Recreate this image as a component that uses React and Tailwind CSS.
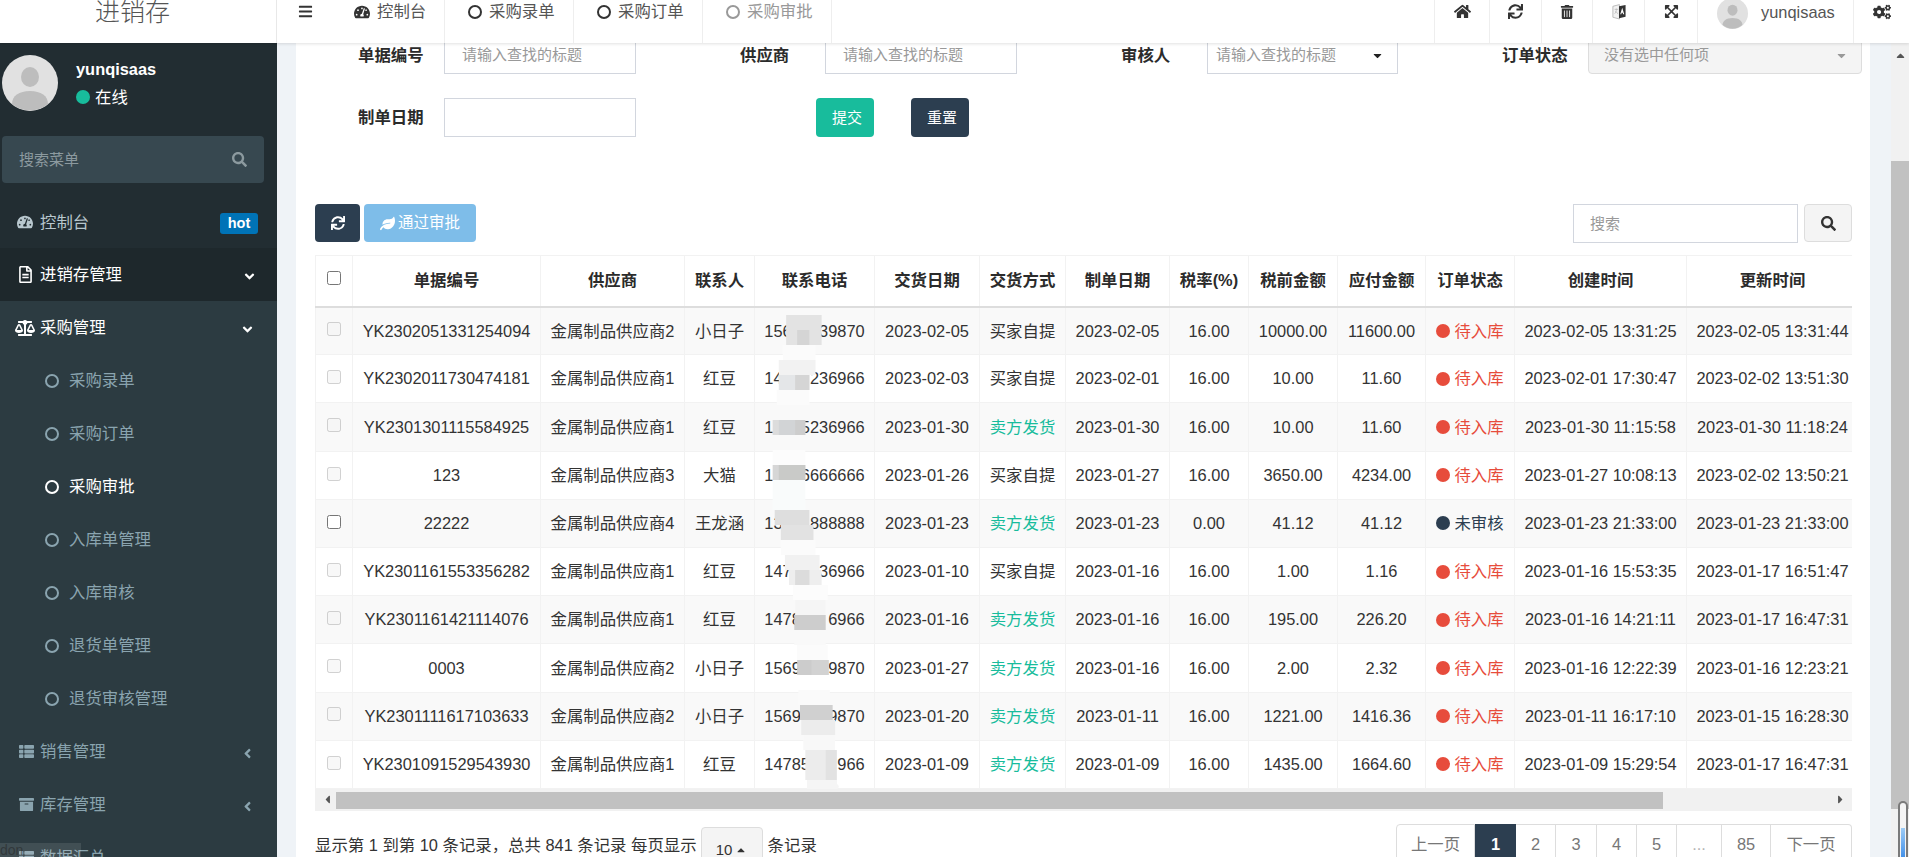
import React from "react";
import {
  FaTachometerAlt, FaBars, FaHome, FaSync, FaTrashAlt, FaExpandArrowsAlt,
  FaCogs, FaSearch, FaRegFileAlt, FaAngleDown, FaAngleLeft, FaBalanceScale, FaThList, FaArchive, FaLeaf,
  FaCaretDown, FaCaretUp, FaCaretLeft, FaCaretRight,
} from "react-icons/fa";

const rows = [
  ["YK2302051331254094", "金属制品供应商2", "小日子", "156", "39870", "2023-02-05", "买家自提", "2023-02-05", "16.00", "10000.00", "11600.00", "待入库", "2023-02-05 13:31:25", "2023-02-05 13:31:44"],
  ["YK2302011730474181", "金属制品供应商1", "红豆", "14", "236966", "2023-02-03", "买家自提", "2023-02-01", "16.00", "10.00", "11.60", "待入库", "2023-02-01 17:30:47", "2023-02-02 13:51:30"],
  ["YK2301301115584925", "金属制品供应商1", "红豆", "1", "5236966", "2023-01-30", "卖方发货", "2023-01-30", "16.00", "10.00", "11.60", "待入库", "2023-01-30 11:15:58", "2023-01-30 11:18:24"],
  ["123", "金属制品供应商3", "大猫", "1", "6666666", "2023-01-26", "买家自提", "2023-01-27", "16.00", "3650.00", "4234.00", "待入库", "2023-01-27 10:08:13", "2023-02-02 13:50:21"],
  ["22222", "金属制品供应商4", "王龙涵", "13", "888888", "2023-01-23", "卖方发货", "2023-01-23", "0.00", "41.12", "41.12", "未审核", "2023-01-23 21:33:00", "2023-01-23 21:33:00"],
  ["YK2301161553356282", "金属制品供应商1", "红豆", "147", "36966", "2023-01-10", "买家自提", "2023-01-16", "16.00", "1.00", "1.16", "待入库", "2023-01-16 15:53:35", "2023-01-17 16:51:47"],
  ["YK2301161421114076", "金属制品供应商1", "红豆", "1478", "6966", "2023-01-16", "卖方发货", "2023-01-16", "16.00", "195.00", "226.20", "待入库", "2023-01-16 14:21:11", "2023-01-17 16:47:31"],
  ["0003", "金属制品供应商2", "小日子", "1569", "9870", "2023-01-27", "卖方发货", "2023-01-16", "16.00", "2.00", "2.32", "待入库", "2023-01-16 12:22:39", "2023-01-16 12:23:21"],
  ["YK2301111617103633", "金属制品供应商2", "小日子", "1569", "9870", "2023-01-20", "卖方发货", "2023-01-11", "16.00", "1221.00", "1416.36", "待入库", "2023-01-11 16:17:10", "2023-01-15 16:28:30"],
  ["YK2301091529543930", "金属制品供应商1", "红豆", "14785", "966", "2023-01-09", "卖方发货", "2023-01-09", "16.00", "1435.00", "1664.60", "待入库", "2023-01-09 15:29:54", "2023-01-17 16:47:31"],
];

const cols = [37, 188, 144, 70, 120, 105, 86, 104, 79, 89, 88, 89, 172, 172];
const heads = ["单据编号", "供应商", "联系人", "联系电话", "交货日期", "交货方式", "制单日期", "税率(%)", "税前金额", "应付金额", "订单状态", "创建时间", "更新时间"];

const mosaic = [
  [358, 445, 45, 135, "#e3e3e3"], [385, 415, 90, 135, "#d5d5d5"], [350, 430, 135, 180, "#fbfbfb"],
  [340, 430, 180, 225, "#f2f2f2"], [340, 415, 225, 270, "#e4e6e8"], [380, 415, 225, 270, "#d5d5d5"],
  [335, 415, 270, 315, "#fbfbfb"], [325, 405, 315, 360, "#f9f9f9"], [325, 405, 360, 405, "#dcdcdc"],
  [340, 380, 360, 405, "#d2d4d6"], [380, 405, 360, 405, "#cdcdcd"], [325, 405, 405, 450, "#f9f9f9"],
  [325, 405, 450, 495, "#fcfcfc"], [325, 405, 495, 540, "#d6d6d6"], [340, 405, 495, 540, "#c9cac8"],
  [325, 405, 540, 630, "#f9fbfb"], [330, 415, 630, 675, "#dedede"], [345, 425, 675, 720, "#e2e2e2"],
  [345, 430, 720, 765, "#fbfbfb"], [355, 440, 765, 810, "#f1f1f1"], [365, 445, 810, 855, "#eeeeee"],
  [380, 415, 810, 855, "#dcdcdc"], [375, 460, 855, 900, "#fcfcfc"], [380, 455, 900, 945, "#f5f5f5"],
  [378, 455, 945, 990, "#cdcdcd"], [378, 455, 990, 1035, "#f9f9f9"], [385, 460, 1035, 1080, "#fbfbfb"],
  [385, 462, 1080, 1125, "#cccccc"], [420, 462, 1080, 1125, "#d2d2d2"], [388, 465, 1170, 1215, "#fafafa"],
  [392, 472, 1215, 1260, "#d0d0d0"], [395, 478, 1260, 1305, "#ececec"], [400, 478, 1305, 1350, "#f8f8f8"],
  [405, 482, 1350, 1440, "#ececec"], [455, 482, 1350, 1440, "#e2e2e2"],
];

const Avatar = ({ className }) => (
  <svg viewBox="0 0 56 56" className={className}>
    <circle cx="28" cy="28" r="28" fill="#e1e1e1" />
    <ellipse cx="28" cy="22" rx="9" ry="10" fill="#bdbdbd" />
    <path d="M28 36c-11 0-18 5-18 13a28 28 0 0 0 36 0c0-8-7-13-18-13z" fill="#bdbdbd" />
  </svg>
);

const Ring = ({ className = "" }) => (
  <span className={`inline-block w-[14px] h-[14px] rounded-full border-[2.5px] border-current shrink-0 ${className}`} />
);

const LanguageIcon = () => (
  <svg viewBox="0 0 16 20" className="w-[14px] h-[18px]">
    <path d="M1 3.500 8.500 1.500V18L1 16z" fill="#f2f2f2" stroke="#b5b5b5" strokeWidth="1" />
    <path d="M8 3.500 15.500 2v13.500L8 17z" fill="#333" />
    <path d="M11.700 5 14 12.500h-1.300l-.5-1.600h-1.100l-.5 1.600H9.400z" fill="#fff" />
    <path d="M3 7h4M5 6v1c0 2-1 4-2 5M4 9c1 1.500 2 2.500 3 3" fill="none" stroke="#b5b5b5" strokeWidth=".8" />
  </svg>
);

function SideItem({ icon, label, cls, chevron, badge }) {
  return (
    <div className={`flex items-center relative shrink-0 ${cls}`}>
      <span className="absolute left-[15px] w-[20px] flex justify-center">{icon}</span>
      <span className="absolute left-[40px] text-[16.4px]">{label}</span>
      {chevron}
      {badge}
    </div>
  );
}

function SubItem({ label, active }) {
  return (
    <div className={`h-[53px] flex items-center pl-[45px] shrink-0 ${active ? "text-white" : "text-[#8aa4af]"}`}>
      <Ring className="mr-[10px]" />
      <span className="text-[16.4px]">{label}</span>
    </div>
  );
}

function Sidebar() {
  return (
    <aside className="absolute left-0 top-[43px] w-[277px] h-[814px] bg-[#222d32] overflow-hidden flex flex-col">
      <div className="relative h-[93px] shrink-0">
        <Avatar className="absolute left-[2px] top-[12px] w-[56px] h-[56px]" />
        <div className="absolute left-[76px] top-[15px] text-white font-bold text-[16.4px] leading-[22px]">yunqisaas</div>
        <div className="absolute left-[76px] top-[43px] flex items-center text-white text-[16.4px] leading-[22px]">
          <span className="w-[14px] h-[14px] rounded-full bg-[#18bc9c] mr-[5px]" />在线
        </div>
      </div>
      <div className="mx-[2px] w-[262px] h-[47px] shrink-0 bg-[#374850] rounded-[4px] flex items-center justify-between pl-[17px] pr-[17px]">
        <span className="text-[15px] text-[#8c9a9f] pt-[2px]">搜索菜单</span>
        <FaSearch className="text-[15px] text-[#8c9a9f]" />
      </div>
      <div className="h-[13px] shrink-0" />
      <SideItem
        cls="text-[#b8c7ce] h-[52px]"
        icon={<FaTachometerAlt className="text-[16px]" />}
        label="控制台"
        badge={<span className="absolute left-[220px] top-[17px] w-[38px] h-[21px] rounded-[3px] bg-[#0073b7] text-white text-[14.5px] font-bold flex items-center justify-center">hot</span>}
      />
      <SideItem
        cls="h-[52px] bg-[#1e282c] text-white"
        icon={<FaRegFileAlt className="text-[17px]" />}
        label="进销存管理"
        chevron={<FaAngleDown className="absolute left-[242px] mt-[4px] text-[15px]" />}
      />
      <div className="flex-1 bg-[#2c3b41] flex flex-col border-t border-[#1e282c]">
        <SideItem
          cls="h-[53px] text-white"
          icon={<FaBalanceScale className="text-[20px]" />}
          label="采购管理"
          chevron={<FaAngleDown className="absolute left-[240px] mt-[4px] text-[15px]" />}
        />
        <SubItem label="采购录单" />
        <SubItem label="采购订单" />
        <SubItem label="采购审批" active />
        <SubItem label="入库单管理" />
        <SubItem label="入库审核" />
        <SubItem label="退货单管理" />
        <SubItem label="退货审核管理" />
        <SideItem
          cls="h-[53px] text-[#8aa4af]"
          icon={<FaThList className="text-[15px] ml-[2px]" />}
          label="销售管理"
          chevron={<FaAngleLeft className="absolute left-[240px] mt-[4px] text-[15px]" />}
        />
        <SideItem
          cls="h-[53px] text-[#8aa4af]"
          icon={<FaArchive className="text-[15px] ml-[2px]" />}
          label="库存管理"
          chevron={<FaAngleLeft className="absolute left-[240px] mt-[4px] text-[15px]" />}
        />
        <SideItem cls="h-[53px] text-[#8aa4af]" icon={<FaThList className="text-[15px] ml-[2px]" />} label="数据汇总" />
      </div>
    </aside>
  );
}

function TopBar() {
  const tab = "h-[43px] flex items-center pb-[20px] border-r border-[#eeeeee] shrink-0";
  const tool = "h-[43px] flex items-center justify-center pb-[20px] border-r border-[#eeeeee] shrink-0 text-[#333] text-[16px]";
  return (
    <header className="absolute left-0 top-0 w-[1909px] h-[43px] bg-white flex z-20 shadow-[0_1px_3px_rgba(0,0,0,0.12)] text-[#555]">
      <div className="w-[277px] h-[43px] border-r border-[#e8e8e8] shrink-0 flex justify-center relative">
        <span className="absolute left-[95px] top-[-5px] text-[25px] leading-[34px] font-light text-[#555]">进销存</span>
      </div>
      <div className="w-[60px] h-[43px] flex pl-[21px] pt-[4px] shrink-0"><FaBars className="text-[15px] text-[#333]" /></div>
      <div className={`${tab} w-[108px] pl-[17px]`}>
        <FaTachometerAlt className="text-[16px] text-[#333] mr-[7px]" /><span className="text-[16.4px]">控制台</span>
      </div>
      {["采购录单", "采购订单"].map((t) => (
        <div key={t} className={`${tab} w-[129px] pl-[23px]`}>
          <Ring className="text-[#333] mr-[7px]" /><span className="text-[16.4px]">{t}</span>
        </div>
      ))}
      <div className={`${tab} w-[129px] pl-[23px] text-[#999]`}>
        <Ring className="mr-[7px]" /><span className="text-[16.4px]">采购审批</span>
      </div>
      <div className="flex-1" />
      <div className="w-px h-[43px] bg-[#eeeeee]" />
      <div className={`${tool} w-[55px]`}><FaHome className="text-[17px]" /></div>
      <div className={`${tool} w-[52px]`}><FaSync className="text-[15px]" /></div>
      <div className={`${tool} w-[51px]`}><FaTrashAlt className="text-[14px]" /></div>
      <div className={`${tool} w-[52px]`}><LanguageIcon /></div>
      <div className={`${tool} w-[53px]`}><FaExpandArrowsAlt className="text-[15px]" /></div>
      <div className="w-[156px] h-[43px] border-r border-[#eeeeee] flex relative shrink-0">
        <Avatar className="absolute left-[19px] top-[-2px] w-[31px] h-[31px]" />
        <span className="absolute left-[63px] top-[1px] text-[16.4px] leading-[22px]">yunqisaas</span>
      </div>
      <div className="w-[55px] h-[43px] flex justify-center pt-[3px] text-[#333]"><FaCogs className="text-[18px]" /></div>
    </header>
  );
}

const labelCls = "font-semibold text-[16.4px] text-[#2b2b2b] shrink-0 whitespace-nowrap";
const inputCls = "h-[39px] border border-[#d2d6de] flex items-center text-[15px] text-[#999] shrink-0 bg-white pt-[2px]";

function Filters() {
  return (
    <div className="pt-[35px]">
      <div className="flex items-start h-[39px]">
        <div className={`${labelCls} ml-[62px] w-[64px] pt-[8px]`}>单据编号</div>
        <div className={`${inputCls} ml-[22px] w-[192px] pl-[17px]`}>请输入查找的标题</div>
        <div className={`${labelCls} ml-[104px] w-[48px] pt-[8px]`}>供应商</div>
        <div className={`${inputCls} ml-[37px] w-[192px] pl-[17px]`}>请输入查找的标题</div>
        <div className={`${labelCls} ml-[104px] w-[48px] pt-[8px]`}>审核人</div>
        <div className={`${inputCls} ml-[38px] w-[191px] pl-[8px] border-[#aaaaaa] relative`}>
          请输入查找的标题
          <FaCaretDown className="absolute left-[163px] text-[13px] text-[#222]" />
        </div>
        <div className={`${labelCls} ml-[104px] w-[64px] pt-[8px]`}>订单状态</div>
        <div className={`${inputCls} ml-[22px] w-[274px] pl-[15px] !bg-[#f4f4f4] border-[#dddddd] rounded-[4px] relative`}>
          没有选中任何项
          <FaCaretDown className="absolute left-[246px] text-[13px] text-[#999]" />
        </div>
      </div>
      <div className="flex items-center h-[39px] mt-[24px]">
        <div className={`${labelCls} ml-[62px] w-[64px]`}>制单日期</div>
        <div className={`${inputCls} ml-[22px] w-[192px]`} />
        <button className="ml-[180px] w-[58px] h-[39px] rounded-[4px] bg-[#18bc9c] text-white text-[15px] pl-[4px] pt-[1px] shrink-0">提交</button>
        <button className="ml-[37px] w-[58px] h-[39px] rounded-[4px] bg-[#2c3e50] text-white text-[15px] pl-[4px] pt-[1px] shrink-0">重置</button>
      </div>
    </div>
  );
}

function Table() {
  return (
    <div className="relative w-[1537px] h-[556px] mt-[12px] overflow-hidden">
      <table className="table-fixed border-collapse w-[1543px] text-[16.4px] text-[#333]">
        <colgroup>
          {cols.map((w, i) => <col key={i} style={{ width: w }} />)}
        </colgroup>
        <thead>
          <tr className="h-[51px] border-t border-[#f2f2f2] border-b-2 border-b-[#dddddd]">
            <th className="border-x border-[#f2f2f2] p-0 text-center">
              <input type="checkbox" className="w-[14px] h-[14px] align-middle mb-[8px]" readOnly />
            </th>
            {heads.map((h) => (
              <th key={h} className="border-x border-[#f2f2f2] p-0 text-center font-semibold text-[#2b2b2b] whitespace-nowrap">{h}</th>
            ))}
          </tr>
        </thead>
        <tbody>
          {rows.map((r, i) => {
            const pending = r[11] === "待入库";
            return (
              <tr key={i} className={`h-[48.2px] border-b border-[#f2f2f2] ${i % 2 === 0 ? "bg-[#f9f9f9]" : "bg-white"}`}>
                <td className="border-x border-[#f2f2f2] p-0 text-center">
                  <input type="checkbox" disabled={pending} className="w-[14px] h-[14px] align-middle mb-[6px]" readOnly />
                </td>
                {r.map((c, j) => {
                  if (j === 3) {
                    return (
                      <td key={j} className="border-x border-[#f2f2f2] p-0 text-center whitespace-nowrap">
                        {c}<span className="invisible">000</span>{r[4]}
                      </td>
                    );
                  }
                  if (j === 4) return null;
                  if (j === 6) {
                    return (
                      <td key={j} className={`border-x border-[#f2f2f2] p-0 text-center whitespace-nowrap ${c === "卖方发货" ? "text-[#18bc9c]" : ""}`}>{c}</td>
                    );
                  }
                  if (j === 11) {
                    return (
                      <td key={j} className={`border-x border-[#f2f2f2] p-0 whitespace-nowrap ${pending ? "text-[#e74c3c]" : "text-[#2c3e50]"}`}>
                        <span className="flex items-center justify-center">
                          <span className={`w-[14px] h-[14px] rounded-full mr-[4px] ${pending ? "bg-[#e74c3c]" : "bg-[#2c3e50]"}`} />{c}
                        </span>
                      </td>
                    );
                  }
                  return <td key={j} className="border-x border-[#f2f2f2] p-0 text-center whitespace-nowrap">{c}</td>;
                })}
              </tr>
            );
          })}
        </tbody>
      </table>
      <div className="absolute left-0 top-[534px] w-[1537px] h-[22px] bg-[#f1f1f1]">
        <FaCaretLeft className="absolute left-[6px] top-[4px] text-[13px] text-[#555]" />
        <div className="absolute left-[21px] top-[3px] w-[1327px] h-[17px] bg-[#c1c1c1]" />
        <FaCaretRight className="absolute left-[1519px] top-[4px] text-[13px] text-[#555]" />
      </div>
    </div>
  );
}

function Footer() {
  const cell = "h-[40px] flex items-center justify-center border-y border-r border-[#dddddd] text-[16.4px] text-[#777] shrink-0 bg-white";
  return (
    <div className="flex justify-between mt-[13px] w-[1537px] h-[60px]">
      <div className="flex items-start text-[16.4px] text-[#333] pt-[9px] whitespace-nowrap">
        <span className="leading-[24px]">显示第 1 到第 10 条记录，总共 841 条记录 每页显示</span>
        <span className="w-[62px] h-[40px] mt-[-6px] ml-[4px] mr-[5px] bg-[#f4f4f4] border border-[#dddddd] rounded-[4px] flex items-center justify-center text-[15px] pt-[6px]">
          10<FaCaretUp className="text-[12px] ml-[3px]" />
        </span>
        <span className="leading-[24px]">条记录</span>
      </div>
      <div className="flex items-start">
        <span className={`${cell} w-[79px] border-l rounded-l-[4px]`}>上一页</span>
        <span className="h-[40px] w-[41px] flex items-center justify-center bg-[#2c3e50] text-white text-[16.4px] font-semibold">1</span>
        <span className={`${cell} w-[40px]`}>2</span>
        <span className={`${cell} w-[41px]`}>3</span>
        <span className={`${cell} w-[40px]`}>4</span>
        <span className={`${cell} w-[40px]`}>5</span>
        <span className={`${cell} w-[45px] !text-[#b5b5b5]`}>...</span>
        <span className={`${cell} w-[49px]`}>85</span>
        <span className={`${cell} w-[81px] rounded-r-[4px]`}>下一页</span>
      </div>
    </div>
  );
}

function Mosaic() {
  return (
    <svg className="absolute left-[754px] top-[307px] z-10 pointer-events-none" width="120" height="482" viewBox="754 307 120 482">
      {mosaic.map(([a, b, c, d, f], i) => (
        <rect key={i} x={640 + a / 2.45} width={(b - a) / 2.45} y={300 + c / 3} height={(d - c) / 3} fill={f} />
      ))}
      <path d="M807 780h30v4a15 5 0 0 1-30 5z" fill="#f5f5f5" />
    </svg>
  );
}

export default function App() {
  return (
    <div className="relative w-[1909px] h-[857px] overflow-hidden bg-[#eff3f7] [font-family:Liberation_Sans,Noto_Sans_CJK_SC,sans-serif]">
      <TopBar />
      <Sidebar />
      <div className="absolute left-0 top-[843px] w-[81px] h-[14px] bg-white/10 z-10 text-[14px] leading-[14px] text-[#222]/50 overflow-hidden">don</div>
      <main className="absolute left-[296px] top-0 w-[1574px] h-[857px] bg-white pl-[19px] overflow-hidden">
        <div className="-ml-[19px]"><Filters /></div>
        <div className="flex justify-between w-[1537px] mt-[67px] h-[39px]">
          <div className="flex gap-[4px]">
            <button className="w-[45px] h-[38px] rounded-[4px] bg-[#2c3e50] text-white flex items-center justify-center"><FaSync className="text-[14px]" /></button>
            <button className="w-[112px] h-[38px] rounded-[4px] bg-[#7ebde9] text-white text-[15.5px] flex items-center justify-center"><FaLeaf className="text-[15px] mr-[3px]" />通过审批</button>
          </div>
          <div className="flex">
            <div className={`${inputCls} w-[225px] pl-[16px]`}>搜索</div>
            <button className="ml-[6px] w-[48px] h-[38px] bg-[#f4f4f4] border border-[#dddddd] rounded-[4px] flex items-center justify-center text-[#333]"><FaSearch className="text-[15px]" /></button>
          </div>
        </div>
        <Table />
        <Footer />
      </main>
      <Mosaic />
      <div className="absolute left-[1891px] top-[43px] w-[18px] h-[814px] bg-[#f1f1f1]">
        <FaCaretUp className="absolute left-[3px] top-[6px] text-[13px] text-[#555]" />
        <div className="absolute left-0 top-[118px] w-[18px] h-[648px] bg-[#c1c1c1]" />
      </div>
      <div className="absolute left-[1898px] top-[801px] w-[10px] h-[60px] rounded-t-[5px] border-2 border-[#7a7a7a] bg-[#f4f4f4] z-10">
        <div className="absolute left-[1px] top-[25px] w-[4px] h-[30px] bg-gradient-to-b from-[#9ccbf5] to-[#3f8fe8]" />
      </div>
    </div>
  );
}
